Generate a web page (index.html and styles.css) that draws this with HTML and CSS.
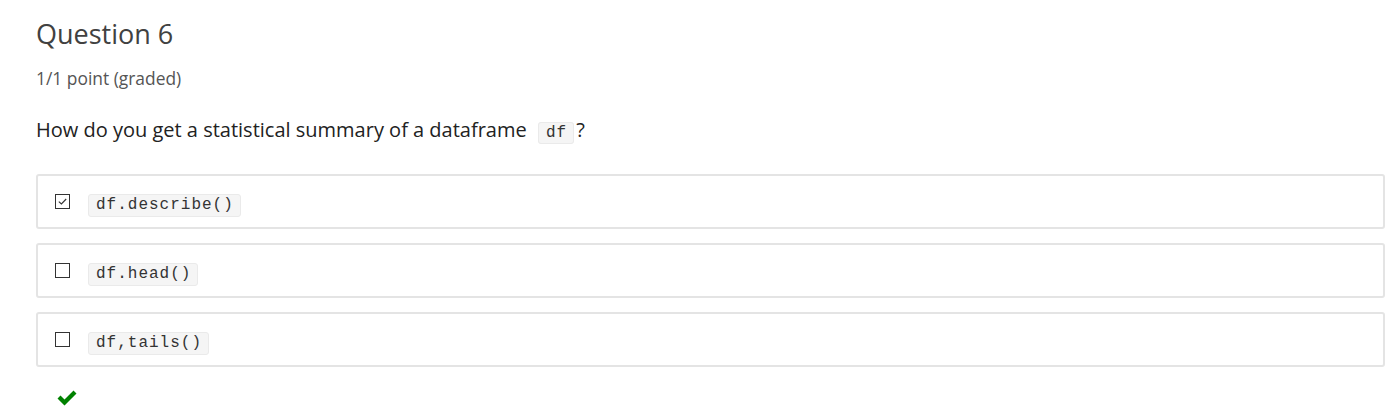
FILE: index.html
```html
<!DOCTYPE html>
<html>
<head>
<meta charset="utf-8">
<link rel="stylesheet" href="styles.css">
</head>
<body>
<div class="problem">
  <h3 class="title">Question 6</h3>
  <div class="points">1/1 point (graded)</div>
  <p class="prompt">How do you get a statistical summary of a dataframe <code>df</code>?</p>
  <div class="choices">
    <label class="choice">
      <span class="box checked"><svg viewBox="0 0 15 15" width="15" height="15"><path d="M3.8 7.6 L6.4 10 L11.2 5" fill="none" stroke="#333" stroke-width="1.1"/></svg></span>
      <code>df.describe()</code>
    </label>
    <label class="choice">
      <span class="box"></span>
      <code>df.head()</code>
    </label>
    <label class="choice">
      <span class="box"></span>
      <code>df,tails()</code>
    </label>
  </div>
  <div class="status">
    <svg viewBox="0 0 22 18" width="22" height="18"><path d="M1.5 9.5 L4.5 6.5 L8.5 10.5 L17.5 1.5 L20.5 4.5 L8.5 16.5 Z" fill="#008100"/></svg>
  </div>
</div>
</body>
</html>
```
FILE: styles.css
```css
body {
  margin: 0;
  background: #fff;
  font-family: "Open Sans", sans-serif;
}
.problem {
  padding: 14px 9px 0 36px;
}
.title {
  margin: 0;
  font-size: 27px;
  font-weight: 400;
  color: #414141;
  line-height: 40px;
}
.points {
  margin-top: 13px;
  font-size: 17.4px;
  color: #555;
  line-height: 22px;
}
.prompt {
  margin: 27px 0 0;
  font-size: 20px;
  color: #222;
  line-height: 28px;
}
code {
  font-family: "Liberation Mono", monospace;
  font-size: 16px;
  letter-spacing: 1px;
  background: #f5f5f5;
  border: 1px solid #eaeaea;
  border-radius: 3px;
  padding: 1px 6px 1px 7px;
  color: #333;
}
.prompt code {
  margin: 0 2px 0 6px;
}
.choices {
  margin-top: 27px;
  display: flex;
  flex-direction: column;
  gap: 14px;
}
.choice {
  display: flex;
  align-items: flex-start;
  gap: 18px;
  height: 51px;
  box-sizing: content-box;
  border: 2px solid #e4e4e4;
  border-radius: 3px;
  padding: 0 17px;
}
.choice .box {
  margin-top: 18px;
}
.choice code {
  margin-top: 18px;
  line-height: 19px;
}
.box {
  width: 15px;
  height: 15px;
  border: 1px solid #333;
  box-sizing: border-box;
  display: flex;
}
.box svg {
  margin: -1px;
}
.status {
  padding: 22px 0 0 20px;
}
```
